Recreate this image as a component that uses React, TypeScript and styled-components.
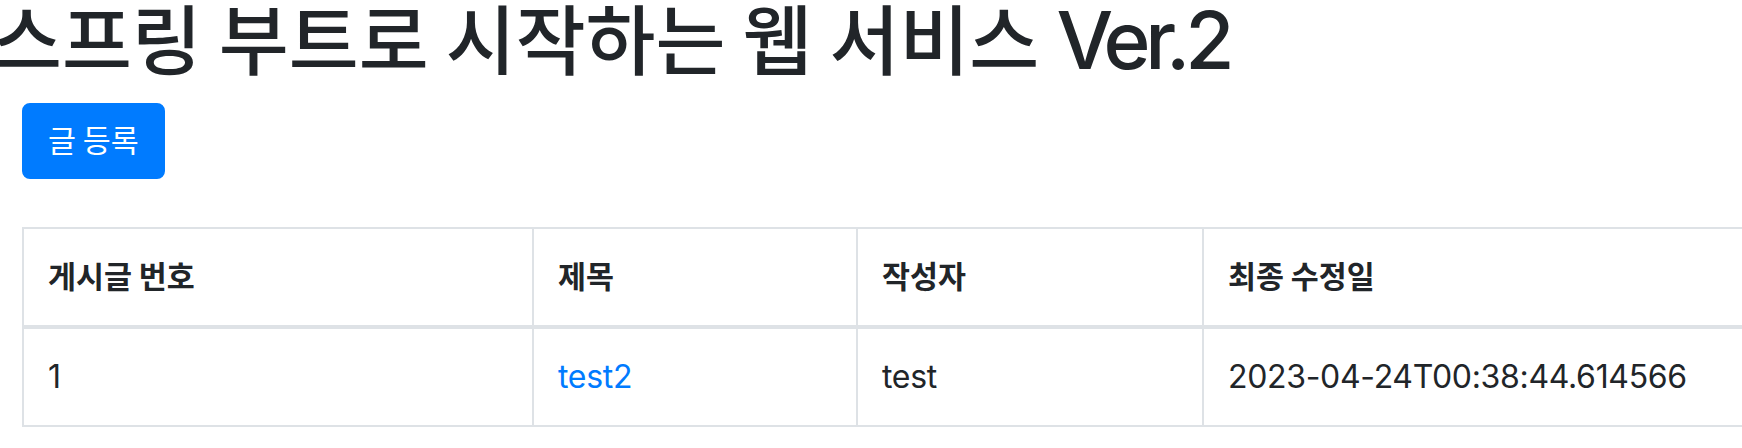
import React from "react";
import styled, { createGlobalStyle } from "styled-components";

const GlobalStyle = createGlobalStyle`
  *, *::before, *::after { box-sizing: border-box; }
  html, body { margin: 0; padding: 0; background: #ffffff; }
  body {
    font-family: Inter, "Noto Sans CJK KR", sans-serif;
    font-size: 32px;
    line-height: 1.5;
    letter-spacing: -0.01em;
    color: #212529;
    overflow: hidden;
  }
`;

const Page = styled.div`
  width: 1750px;
  margin: -9px 0 0 -8px;
  overflow: hidden;
`;

const Ko = styled.span`
  font-family: "Noto Sans CJK KR", sans-serif;
  font-size: 0.95em;
  letter-spacing: 0;
`;

const Title = styled.h1`
  margin: 0 0 15px;
  font-size: 80px;
  font-weight: 500;
  line-height: 1.2;
  letter-spacing: -0.065em;
  white-space: nowrap;
`;

const Content = styled.div`
  padding-left: 30px;
  display: flex;
  flex-direction: column;
  align-items: flex-start;
  gap: 48px;
`;

const Toolbar = styled.div`
  display: flex;
  gap: 16px;
`;

const PrimaryButton = styled.button`
  display: inline-block;
  padding: 12px 24px;
  font: inherit;
  font-size: 32px;
  line-height: 1.5;
  font-weight: 400;
  color: #ffffff;
  background: #007bff;
  border: 2px solid #007bff;
  border-radius: 8px;
  cursor: pointer;
`;

const Table = styled.table`
  border-collapse: separate;
  border-spacing: 0;
  table-layout: fixed;
  width: 1782px;
  border-top: 2px solid #dee2e6;
  border-left: 2px solid #dee2e6;
  color: #212529;
`;

const HeadCell = styled.th<{ $w: number }>`
  width: ${(p) => p.$w}px;
  padding: 24px;
  text-align: left;
  vertical-align: bottom;
  font-weight: 700;
  white-space: nowrap;
  border-right: 2px solid #dee2e6;
  border-bottom: 4px solid #dee2e6;
`;

const Cell = styled.td`
  padding: 24px;
  vertical-align: top;
  white-space: nowrap;
  border-right: 2px solid #dee2e6;
  border-bottom: 2px solid #dee2e6;
`;

const TitleLink = styled.a`
  color: #007bff;
  text-decoration: none;
`;

const columns = [
  { label: "게시글 번호", width: 510 },
  { label: "제목", width: 324 },
  { label: "작성자", width: 346 },
  { label: "최종 수정일", width: 600 },
];

const posts = [
  { id: 1, title: "test2", author: "test", modified: "2023-04-24T00:38:44.614566" },
];

export default function App() {
  return (
    <>
      <GlobalStyle />
      <Page>
        <Title>
          <Ko>스프링 부트로 시작하는 웹 서비스 </Ko>Ver.2
        </Title>
        <Content>
          <Toolbar>
            <PrimaryButton type="button">
              <Ko>글 등록</Ko>
            </PrimaryButton>
          </Toolbar>
          <Table>
            <thead>
              <tr>
                {columns.map((c) => (
                  <HeadCell key={c.label} $w={c.width}>
                    <Ko>{c.label}</Ko>
                  </HeadCell>
                ))}
              </tr>
            </thead>
            <tbody>
              {posts.map((p) => (
                <tr key={p.id}>
                  <Cell>{p.id}</Cell>
                  <Cell>
                    <TitleLink href="#">{p.title}</TitleLink>
                  </Cell>
                  <Cell>{p.author}</Cell>
                  <Cell>{p.modified}</Cell>
                </tr>
              ))}
            </tbody>
          </Table>
        </Content>
      </Page>
    </>
  );
}
